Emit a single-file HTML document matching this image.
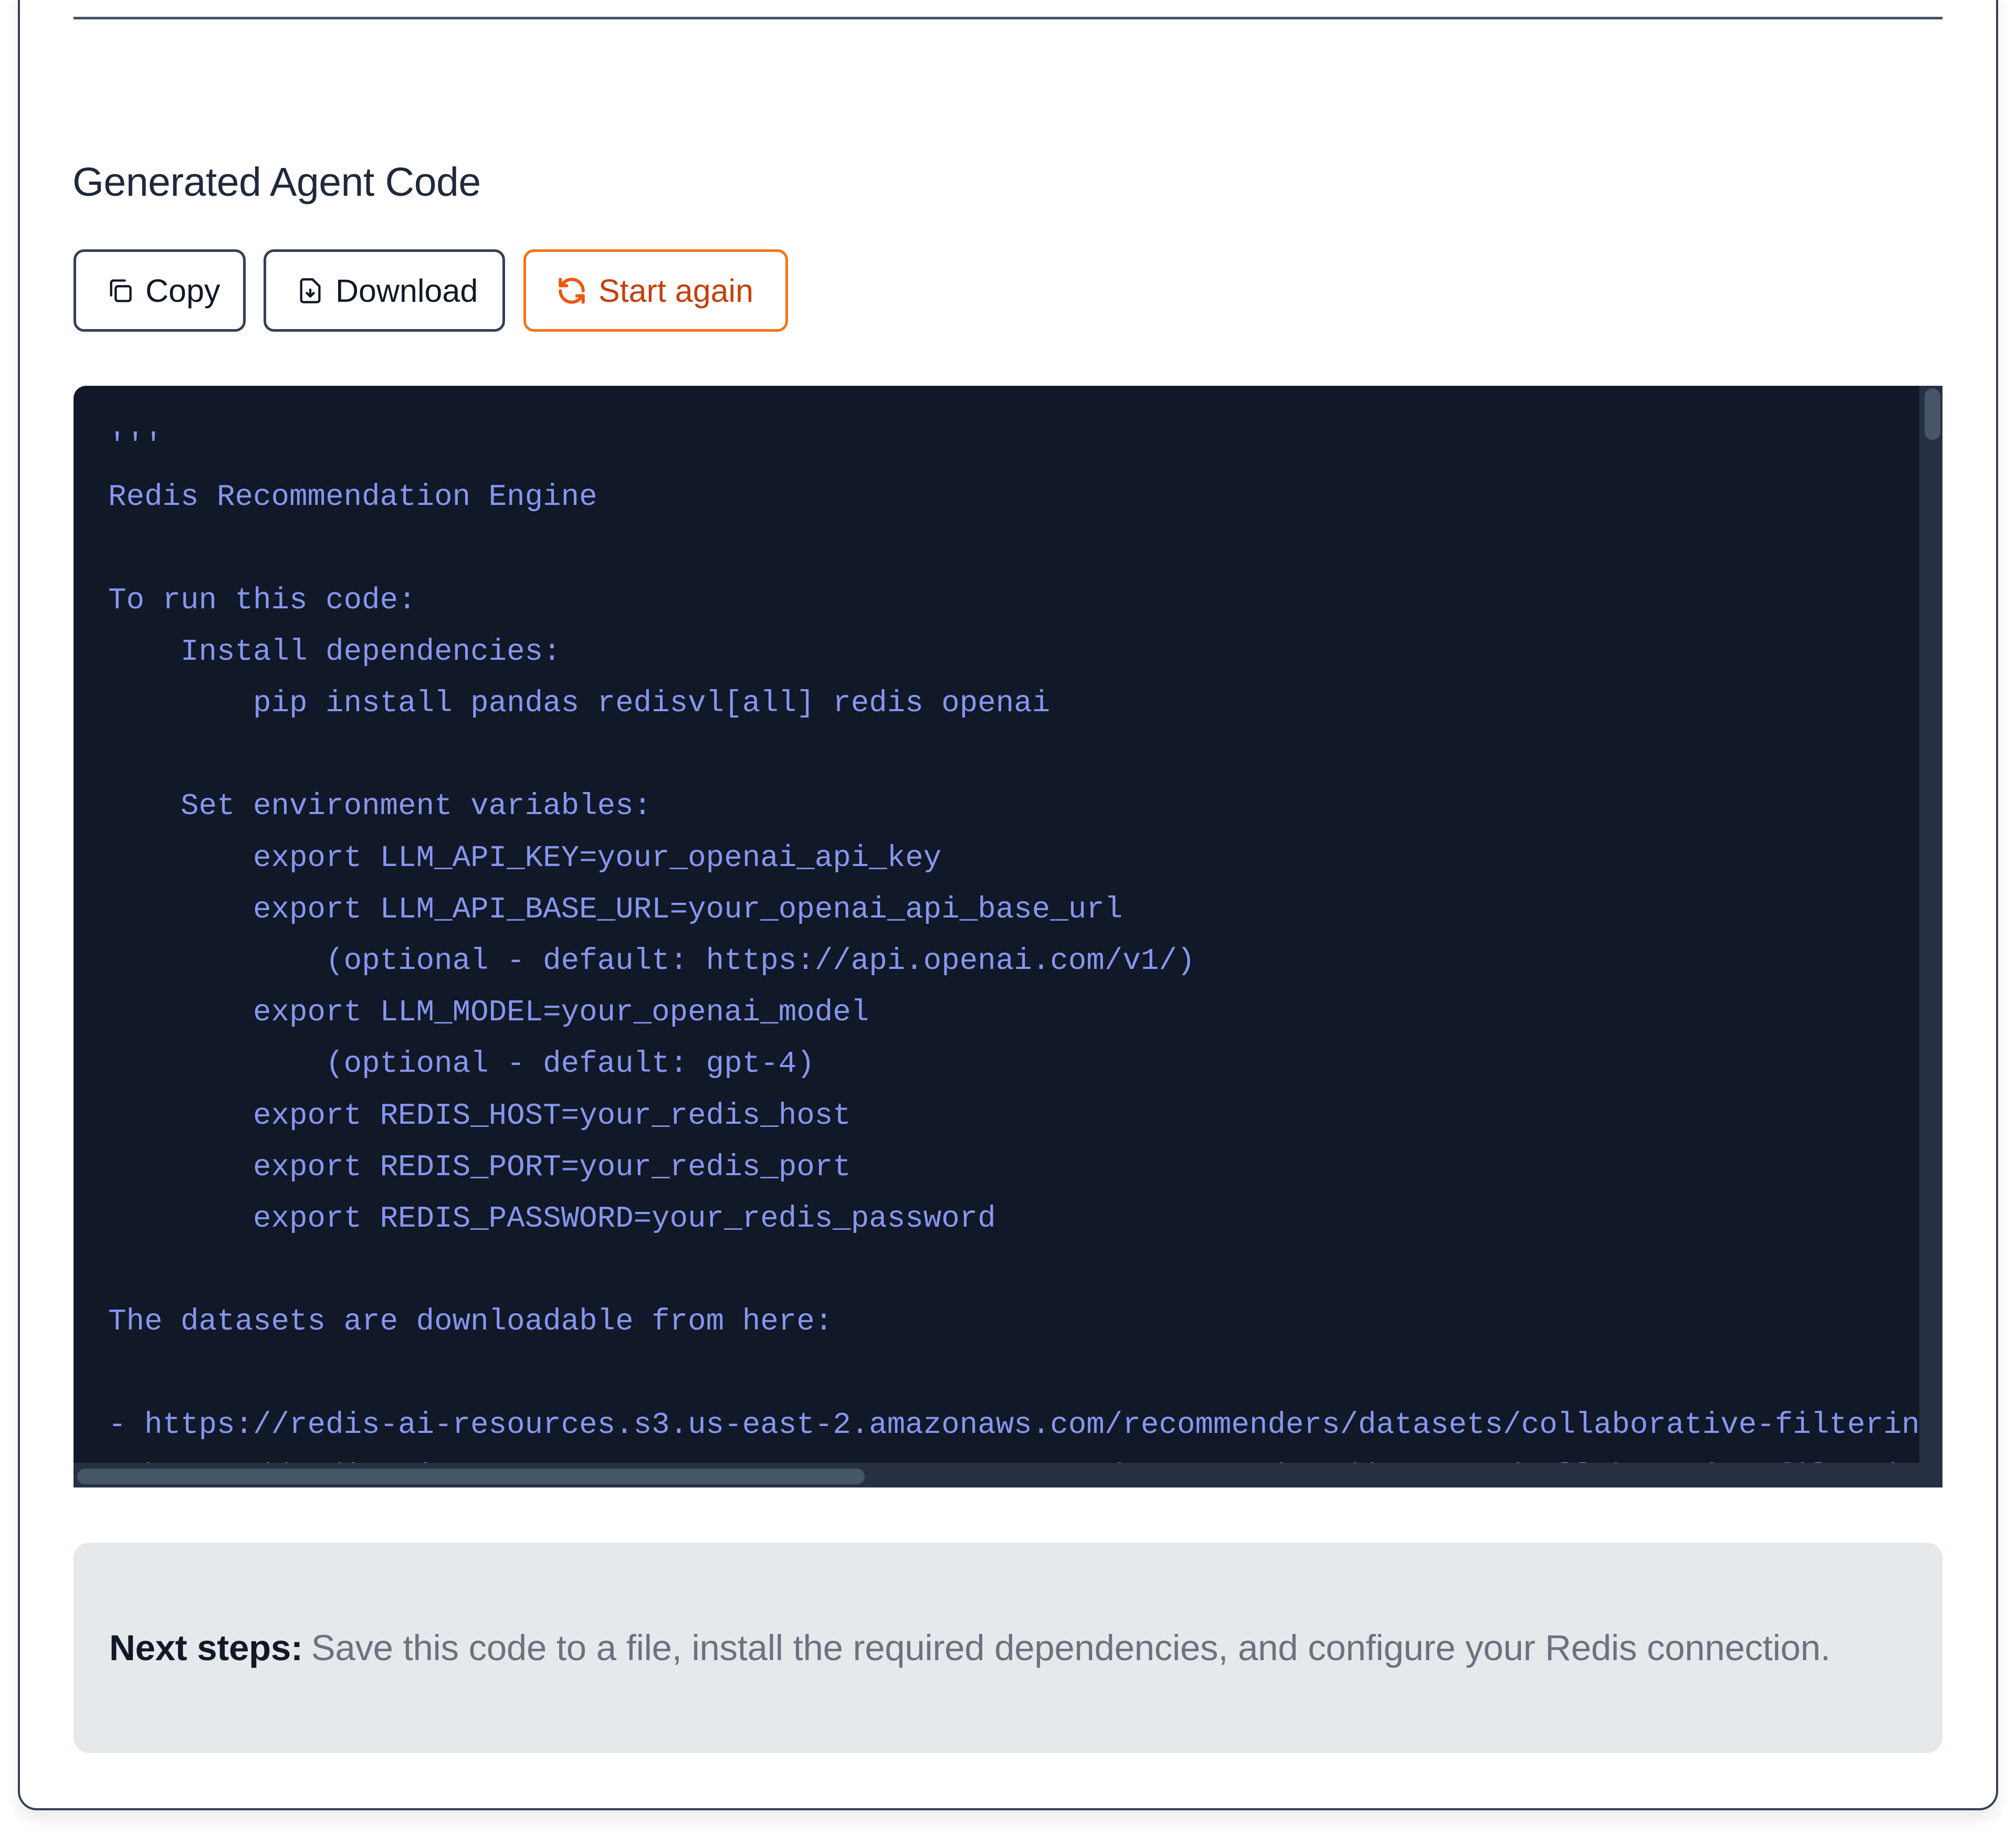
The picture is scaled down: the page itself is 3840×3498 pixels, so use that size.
<!DOCTYPE html>
<html><head><meta charset="utf-8"><style>
html,body{margin:0;padding:0;background:#fff;width:3840px;height:3498px;overflow:hidden;font-family:"Liberation Sans",sans-serif}
.card{position:absolute;left:34px;top:-40px;width:3772px;height:3489px;border:4px solid #334155;border-radius:36px;box-sizing:border-box;box-shadow:0 18px 30px rgba(0,0,0,0.08)}
.line{position:absolute;left:140px;top:32px;width:3560px;height:5px;background:#475569}
h2{position:absolute;left:138px;top:303px;margin:0;font-weight:400;font-size:77px;color:#1e293b;letter-spacing:-0.5px}
.btn{position:absolute;top:475px;height:157px;box-sizing:border-box;border:5px solid #334155;border-radius:20px;font-size:61px;color:#111827;display:flex;align-items:center;padding-left:58px}
.btn svg{margin-right:22px}
.code{position:absolute;left:140px;top:735px;width:3560px;height:2099px;background:#111827;border-radius:24px 0 0 0;overflow:hidden}
pre{margin:0;position:absolute;left:66px;top:66px;font-family:"Liberation Mono",monospace;font-size:57.5px;line-height:98.2px;color:#8796f0;white-space:pre}
.vtrack{position:absolute;right:0;top:0;width:44px;height:2052px;background:#273043}
.vthumb{position:absolute;right:4px;top:5px;width:30px;height:98px;border-radius:15px;background:#475569}
.htrack{position:absolute;left:0;bottom:0;width:3560px;height:47px;background:#273043}
.hthumb{position:absolute;left:7px;bottom:6px;width:1500px;height:30px;border-radius:15px;background:#475569}
.next{position:absolute;left:140px;top:2939px;width:3560px;height:401px;background:#e6e9eb;border-radius:30px;box-sizing:border-box;padding-left:68px;display:flex;align-items:center;font-size:69px;color:#6b7280;letter-spacing:-0.3px}
.next b{color:#111827;margin-right:16px}
</style></head><body>
<div class="card"></div>
<div class="line"></div>
<h2>Generated Agent Code</h2>
<div class="btn" style="left:140px;width:328px">
<svg width="52" height="52" viewBox="0 0 24 24" fill="none" stroke="#111827" stroke-width="2" stroke-linecap="round" stroke-linejoin="round"><rect x="8" y="8" width="13" height="13" rx="2"/><path d="M4 16V5a2 2 0 0 1 2-2h10"/></svg>Copy</div>
<div class="btn" style="left:502px;width:460px">
<svg width="52" height="56" viewBox="0 0 24 24" fill="none" stroke="#111827" stroke-width="2" stroke-linecap="round" stroke-linejoin="round"><path d="M14 2H6a2 2 0 0 0-2 2v16a2 2 0 0 0 2 2h12a2 2 0 0 0 2-2V8z"/><path d="M12 11v6M9 14l3 3 3-3"/></svg>Download</div>
<div class="btn" style="left:997px;width:504px;border-color:#f97316;color:#c2410c">
<svg width="58" height="58" viewBox="0 0 24 24" fill="none" stroke="#ea580c" stroke-width="2.5" stroke-linecap="round" stroke-linejoin="round"><path d="M21 12a9 9 0 0 0-15.5-6.2L3 8"/><path d="M3 3v5h5"/><path d="M3 12a9 9 0 0 0 15.5 6.2L21 16"/><path d="M16 16h5v5"/></svg>Start again</div>
<div class="code">
<pre>'''
Redis Recommendation Engine

To run this code:
    Install dependencies:
        pip install pandas redisvl[all] redis openai

    Set environment variables:
        export LLM_API_KEY=your_openai_api_key
        export LLM_API_BASE_URL=your_openai_api_base_url
            (optional - default: https://api.openai.com/v1/)
        export LLM_MODEL=your_openai_model
            (optional - default: gpt-4)
        export REDIS_HOST=your_redis_host
        export REDIS_PORT=your_redis_port
        export REDIS_PASSWORD=your_redis_password

The datasets are downloadable from here:

- https://redis-ai-resources.s3.us-east-2.amazonaws.com/recommenders/datasets/collaborative-filtering/ratings.csv
- https://redis-ai-resources.s3.us-east-2.amazonaws.com/recommenders/datasets/collaborative-filtering/movies.csv</pre>
<div class="vtrack"><div class="vthumb"></div></div>
<div class="htrack"><div class="hthumb"></div></div>
</div>
<div class="next"><b>Next steps:</b>Save this code to a file, install the required dependencies, and configure your Redis connection.</div>
</body></html>
